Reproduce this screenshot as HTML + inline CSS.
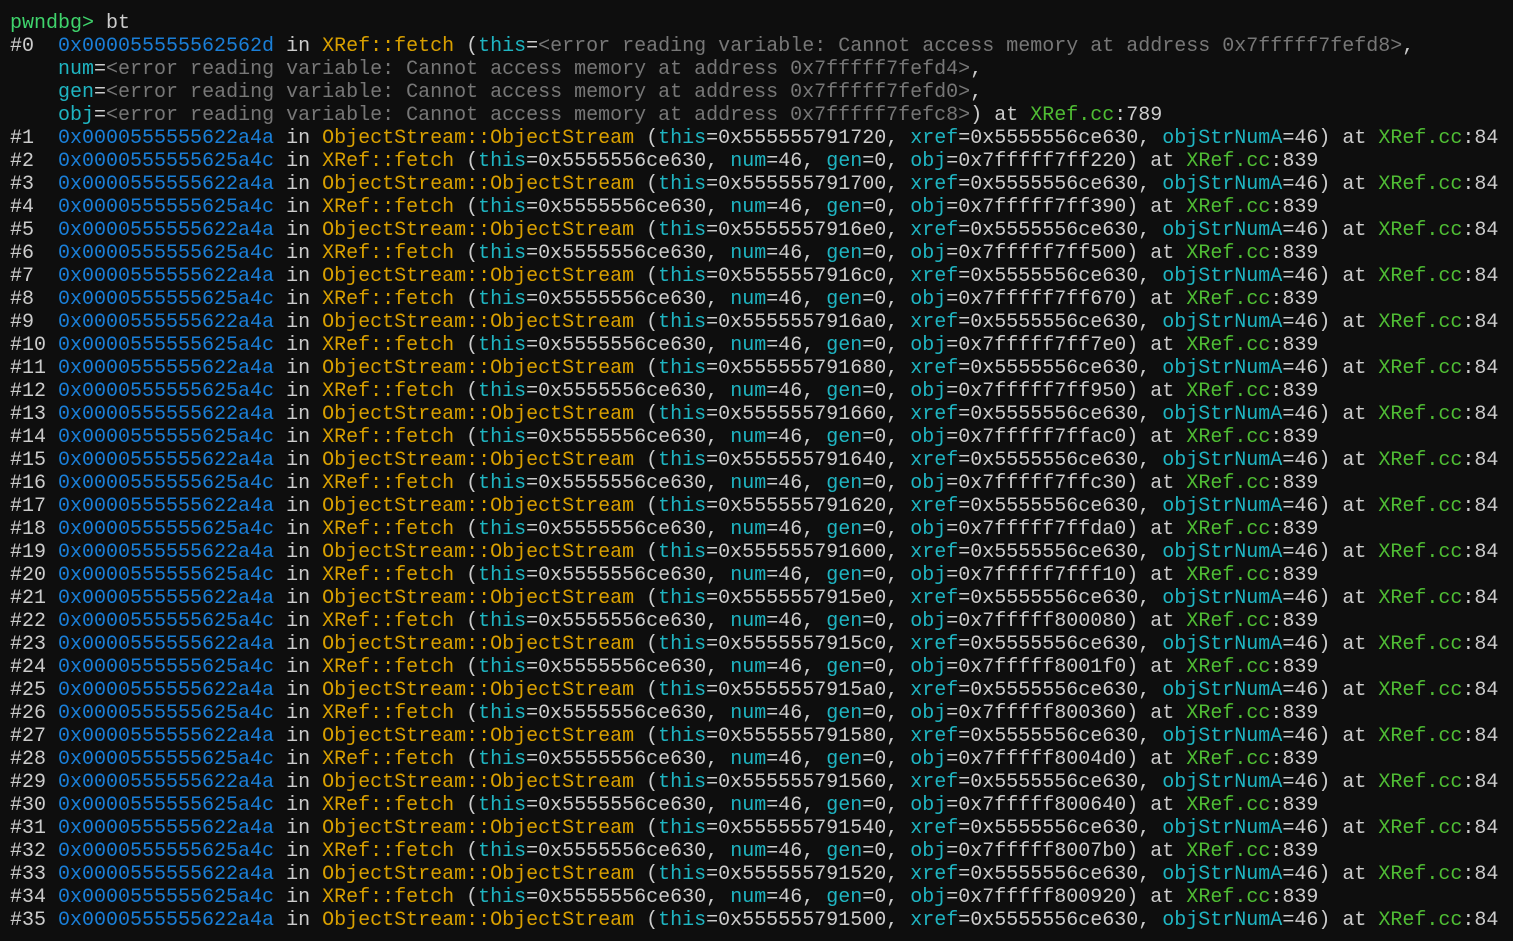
<!DOCTYPE html>
<html><head><meta charset="utf-8"><style>
html,body{margin:0;padding:0;background:#0e0e0e;width:1513px;height:941px;overflow:hidden}
pre{margin:0;padding:12px 0 0 10px;font-family:"Liberation Mono",monospace;font-size:20px;line-height:23px;color:#cccccc;white-space:pre;overflow:hidden;width:1503px}
.g{color:#3fd46c}.a{color:#1a7fd8}.f{color:#d9a000}.p{color:#1fb5c2}.e{color:#777777}.s{color:#4fbd34}
</style></head><body><pre><span class="g">pwndbg&gt;</span> bt
#0  <span class="a">0x000055555562562d</span> in <span class="f">XRef::fetch</span> (<span class="p">this</span>=<span class="e">&lt;error reading variable: Cannot access memory at address 0x7fffff7fefd8&gt;</span>,
    <span class="p">num</span>=<span class="e">&lt;error reading variable: Cannot access memory at address 0x7fffff7fefd4&gt;</span>,
    <span class="p">gen</span>=<span class="e">&lt;error reading variable: Cannot access memory at address 0x7fffff7fefd0&gt;</span>,
    <span class="p">obj</span>=<span class="e">&lt;error reading variable: Cannot access memory at address 0x7fffff7fefc8&gt;</span>) at <span class="s">XRef.cc</span>:789
#1  <span class="a">0x0000555555622a4a</span> in <span class="f">ObjectStream::ObjectStream</span> (<span class="p">this</span>=0x555555791720, <span class="p">xref</span>=0x5555556ce630, <span class="p">objStrNumA</span>=46) at <span class="s">XRef.cc</span>:84
#2  <span class="a">0x0000555555625a4c</span> in <span class="f">XRef::fetch</span> (<span class="p">this</span>=0x5555556ce630, <span class="p">num</span>=46, <span class="p">gen</span>=0, <span class="p">obj</span>=0x7fffff7ff220) at <span class="s">XRef.cc</span>:839
#3  <span class="a">0x0000555555622a4a</span> in <span class="f">ObjectStream::ObjectStream</span> (<span class="p">this</span>=0x555555791700, <span class="p">xref</span>=0x5555556ce630, <span class="p">objStrNumA</span>=46) at <span class="s">XRef.cc</span>:84
#4  <span class="a">0x0000555555625a4c</span> in <span class="f">XRef::fetch</span> (<span class="p">this</span>=0x5555556ce630, <span class="p">num</span>=46, <span class="p">gen</span>=0, <span class="p">obj</span>=0x7fffff7ff390) at <span class="s">XRef.cc</span>:839
#5  <span class="a">0x0000555555622a4a</span> in <span class="f">ObjectStream::ObjectStream</span> (<span class="p">this</span>=0x5555557916e0, <span class="p">xref</span>=0x5555556ce630, <span class="p">objStrNumA</span>=46) at <span class="s">XRef.cc</span>:84
#6  <span class="a">0x0000555555625a4c</span> in <span class="f">XRef::fetch</span> (<span class="p">this</span>=0x5555556ce630, <span class="p">num</span>=46, <span class="p">gen</span>=0, <span class="p">obj</span>=0x7fffff7ff500) at <span class="s">XRef.cc</span>:839
#7  <span class="a">0x0000555555622a4a</span> in <span class="f">ObjectStream::ObjectStream</span> (<span class="p">this</span>=0x5555557916c0, <span class="p">xref</span>=0x5555556ce630, <span class="p">objStrNumA</span>=46) at <span class="s">XRef.cc</span>:84
#8  <span class="a">0x0000555555625a4c</span> in <span class="f">XRef::fetch</span> (<span class="p">this</span>=0x5555556ce630, <span class="p">num</span>=46, <span class="p">gen</span>=0, <span class="p">obj</span>=0x7fffff7ff670) at <span class="s">XRef.cc</span>:839
#9  <span class="a">0x0000555555622a4a</span> in <span class="f">ObjectStream::ObjectStream</span> (<span class="p">this</span>=0x5555557916a0, <span class="p">xref</span>=0x5555556ce630, <span class="p">objStrNumA</span>=46) at <span class="s">XRef.cc</span>:84
#10 <span class="a">0x0000555555625a4c</span> in <span class="f">XRef::fetch</span> (<span class="p">this</span>=0x5555556ce630, <span class="p">num</span>=46, <span class="p">gen</span>=0, <span class="p">obj</span>=0x7fffff7ff7e0) at <span class="s">XRef.cc</span>:839
#11 <span class="a">0x0000555555622a4a</span> in <span class="f">ObjectStream::ObjectStream</span> (<span class="p">this</span>=0x555555791680, <span class="p">xref</span>=0x5555556ce630, <span class="p">objStrNumA</span>=46) at <span class="s">XRef.cc</span>:84
#12 <span class="a">0x0000555555625a4c</span> in <span class="f">XRef::fetch</span> (<span class="p">this</span>=0x5555556ce630, <span class="p">num</span>=46, <span class="p">gen</span>=0, <span class="p">obj</span>=0x7fffff7ff950) at <span class="s">XRef.cc</span>:839
#13 <span class="a">0x0000555555622a4a</span> in <span class="f">ObjectStream::ObjectStream</span> (<span class="p">this</span>=0x555555791660, <span class="p">xref</span>=0x5555556ce630, <span class="p">objStrNumA</span>=46) at <span class="s">XRef.cc</span>:84
#14 <span class="a">0x0000555555625a4c</span> in <span class="f">XRef::fetch</span> (<span class="p">this</span>=0x5555556ce630, <span class="p">num</span>=46, <span class="p">gen</span>=0, <span class="p">obj</span>=0x7fffff7ffac0) at <span class="s">XRef.cc</span>:839
#15 <span class="a">0x0000555555622a4a</span> in <span class="f">ObjectStream::ObjectStream</span> (<span class="p">this</span>=0x555555791640, <span class="p">xref</span>=0x5555556ce630, <span class="p">objStrNumA</span>=46) at <span class="s">XRef.cc</span>:84
#16 <span class="a">0x0000555555625a4c</span> in <span class="f">XRef::fetch</span> (<span class="p">this</span>=0x5555556ce630, <span class="p">num</span>=46, <span class="p">gen</span>=0, <span class="p">obj</span>=0x7fffff7ffc30) at <span class="s">XRef.cc</span>:839
#17 <span class="a">0x0000555555622a4a</span> in <span class="f">ObjectStream::ObjectStream</span> (<span class="p">this</span>=0x555555791620, <span class="p">xref</span>=0x5555556ce630, <span class="p">objStrNumA</span>=46) at <span class="s">XRef.cc</span>:84
#18 <span class="a">0x0000555555625a4c</span> in <span class="f">XRef::fetch</span> (<span class="p">this</span>=0x5555556ce630, <span class="p">num</span>=46, <span class="p">gen</span>=0, <span class="p">obj</span>=0x7fffff7ffda0) at <span class="s">XRef.cc</span>:839
#19 <span class="a">0x0000555555622a4a</span> in <span class="f">ObjectStream::ObjectStream</span> (<span class="p">this</span>=0x555555791600, <span class="p">xref</span>=0x5555556ce630, <span class="p">objStrNumA</span>=46) at <span class="s">XRef.cc</span>:84
#20 <span class="a">0x0000555555625a4c</span> in <span class="f">XRef::fetch</span> (<span class="p">this</span>=0x5555556ce630, <span class="p">num</span>=46, <span class="p">gen</span>=0, <span class="p">obj</span>=0x7fffff7fff10) at <span class="s">XRef.cc</span>:839
#21 <span class="a">0x0000555555622a4a</span> in <span class="f">ObjectStream::ObjectStream</span> (<span class="p">this</span>=0x5555557915e0, <span class="p">xref</span>=0x5555556ce630, <span class="p">objStrNumA</span>=46) at <span class="s">XRef.cc</span>:84
#22 <span class="a">0x0000555555625a4c</span> in <span class="f">XRef::fetch</span> (<span class="p">this</span>=0x5555556ce630, <span class="p">num</span>=46, <span class="p">gen</span>=0, <span class="p">obj</span>=0x7fffff800080) at <span class="s">XRef.cc</span>:839
#23 <span class="a">0x0000555555622a4a</span> in <span class="f">ObjectStream::ObjectStream</span> (<span class="p">this</span>=0x5555557915c0, <span class="p">xref</span>=0x5555556ce630, <span class="p">objStrNumA</span>=46) at <span class="s">XRef.cc</span>:84
#24 <span class="a">0x0000555555625a4c</span> in <span class="f">XRef::fetch</span> (<span class="p">this</span>=0x5555556ce630, <span class="p">num</span>=46, <span class="p">gen</span>=0, <span class="p">obj</span>=0x7fffff8001f0) at <span class="s">XRef.cc</span>:839
#25 <span class="a">0x0000555555622a4a</span> in <span class="f">ObjectStream::ObjectStream</span> (<span class="p">this</span>=0x5555557915a0, <span class="p">xref</span>=0x5555556ce630, <span class="p">objStrNumA</span>=46) at <span class="s">XRef.cc</span>:84
#26 <span class="a">0x0000555555625a4c</span> in <span class="f">XRef::fetch</span> (<span class="p">this</span>=0x5555556ce630, <span class="p">num</span>=46, <span class="p">gen</span>=0, <span class="p">obj</span>=0x7fffff800360) at <span class="s">XRef.cc</span>:839
#27 <span class="a">0x0000555555622a4a</span> in <span class="f">ObjectStream::ObjectStream</span> (<span class="p">this</span>=0x555555791580, <span class="p">xref</span>=0x5555556ce630, <span class="p">objStrNumA</span>=46) at <span class="s">XRef.cc</span>:84
#28 <span class="a">0x0000555555625a4c</span> in <span class="f">XRef::fetch</span> (<span class="p">this</span>=0x5555556ce630, <span class="p">num</span>=46, <span class="p">gen</span>=0, <span class="p">obj</span>=0x7fffff8004d0) at <span class="s">XRef.cc</span>:839
#29 <span class="a">0x0000555555622a4a</span> in <span class="f">ObjectStream::ObjectStream</span> (<span class="p">this</span>=0x555555791560, <span class="p">xref</span>=0x5555556ce630, <span class="p">objStrNumA</span>=46) at <span class="s">XRef.cc</span>:84
#30 <span class="a">0x0000555555625a4c</span> in <span class="f">XRef::fetch</span> (<span class="p">this</span>=0x5555556ce630, <span class="p">num</span>=46, <span class="p">gen</span>=0, <span class="p">obj</span>=0x7fffff800640) at <span class="s">XRef.cc</span>:839
#31 <span class="a">0x0000555555622a4a</span> in <span class="f">ObjectStream::ObjectStream</span> (<span class="p">this</span>=0x555555791540, <span class="p">xref</span>=0x5555556ce630, <span class="p">objStrNumA</span>=46) at <span class="s">XRef.cc</span>:84
#32 <span class="a">0x0000555555625a4c</span> in <span class="f">XRef::fetch</span> (<span class="p">this</span>=0x5555556ce630, <span class="p">num</span>=46, <span class="p">gen</span>=0, <span class="p">obj</span>=0x7fffff8007b0) at <span class="s">XRef.cc</span>:839
#33 <span class="a">0x0000555555622a4a</span> in <span class="f">ObjectStream::ObjectStream</span> (<span class="p">this</span>=0x555555791520, <span class="p">xref</span>=0x5555556ce630, <span class="p">objStrNumA</span>=46) at <span class="s">XRef.cc</span>:84
#34 <span class="a">0x0000555555625a4c</span> in <span class="f">XRef::fetch</span> (<span class="p">this</span>=0x5555556ce630, <span class="p">num</span>=46, <span class="p">gen</span>=0, <span class="p">obj</span>=0x7fffff800920) at <span class="s">XRef.cc</span>:839
#35 <span class="a">0x0000555555622a4a</span> in <span class="f">ObjectStream::ObjectStream</span> (<span class="p">this</span>=0x555555791500, <span class="p">xref</span>=0x5555556ce630, <span class="p">objStrNumA</span>=46) at <span class="s">XRef.cc</span>:84</pre></body></html>
